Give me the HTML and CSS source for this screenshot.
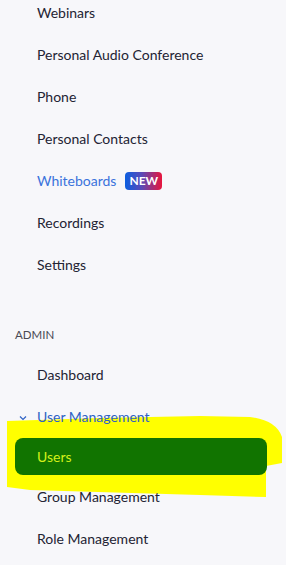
FILE: index.html
```html
<!DOCTYPE html>
<html>
<head>
<meta charset="utf-8">
<link rel="stylesheet" href="styles.css">
</head>
<body>
<nav class="nav">
  <ul class="menu">
    <li class="item">Webinars</li>
    <li class="item">Personal Audio Conference</li>
    <li class="item">Phone</li>
    <li class="item">Personal Contacts</li>
    <li class="item item-link">Whiteboards <span class="badge">NEW</span></li>
    <li class="item">Recordings</li>
    <li class="item">Settings</li>
  </ul>
  <div class="section-title">ADMIN</div>
  <ul class="menu">
    <li class="item">Dashboard</li>
    <li class="item item-open">
      <svg class="chev" width="8" height="6" viewBox="0 0 8 6"><path d="M1 1.5 L4 4.5 L7 1.5" fill="none" stroke="#2f62c4" stroke-width="1.2"/></svg>
      User Management
    </li>
    <li class="sub-active"><span class="active-box">Users</span></li>
    <li class="item">Group Management</li>
    <li class="item">Role Management</li>
  </ul>
  <svg class="highlight" width="286" height="100" viewBox="0 400 286 100">
    <path d="M7 421 L100 418 L200 416 L250 417 Q276 420 282 437 L282 463 L266 466 L266 497 L200 495 L30 490 L7 487 Z" fill="#ffff00"/>
  </svg>
</nav>
</body>
</html>
```
FILE: styles.css
```css
html, body {
  margin: 0;
  padding: 0;
  background: #f7f7fa;
}
body {
  font-family: Lato, "Open Sans", sans-serif;
  color: #232333;
  width: 286px;
  height: 565px;
  overflow: hidden;
}
.nav {
  position: relative;
  margin-top: -8px;
}
.menu {
  list-style: none;
  margin: 0;
  padding: 0;
  position: relative;
  z-index: 1;
}
.item {
  height: 42px;
  line-height: 42px;
  padding-left: 37px;
  font-size: 14px;
  display: flex;
  align-items: center;
  white-space: nowrap;
}
.item-link {
  color: #3a73dc;
}
.badge {
  display: inline-block;
  margin-left: 9px;
  height: 18px;
  line-height: 18px;
  padding: 0 4px;
  border-radius: 4px;
  font-size: 12px;
  font-weight: 700;
  color: #fff;
  background: linear-gradient(90deg, #0b5fe0 0%, #5a4ab8 45%, #e8153c 100%);
}
.section-title {
  padding: 40px 0 10px 15px;
  line-height: 18px;
  font-size: 11.5px;
  color: #4a4a55;
  position: relative;
  z-index: 1;
}
.item-open {
  color: #2f62c4;
  position: relative;
}
.chev {
  position: absolute;
  left: 19px;
  top: 19px;
}
.sub-active {
  height: 38px;
  padding-left: 15px;
  padding-right: 19px;
}
.active-box {
  display: block;
  height: 37px;
  line-height: 37px;
  padding-left: 22px;
  border-radius: 8px;
  background: #117400;
  color: #d2f01a;
  font-size: 14px;
}
.highlight {
  position: absolute;
  left: 0;
  top: 408px;
  z-index: 0;
}
```
